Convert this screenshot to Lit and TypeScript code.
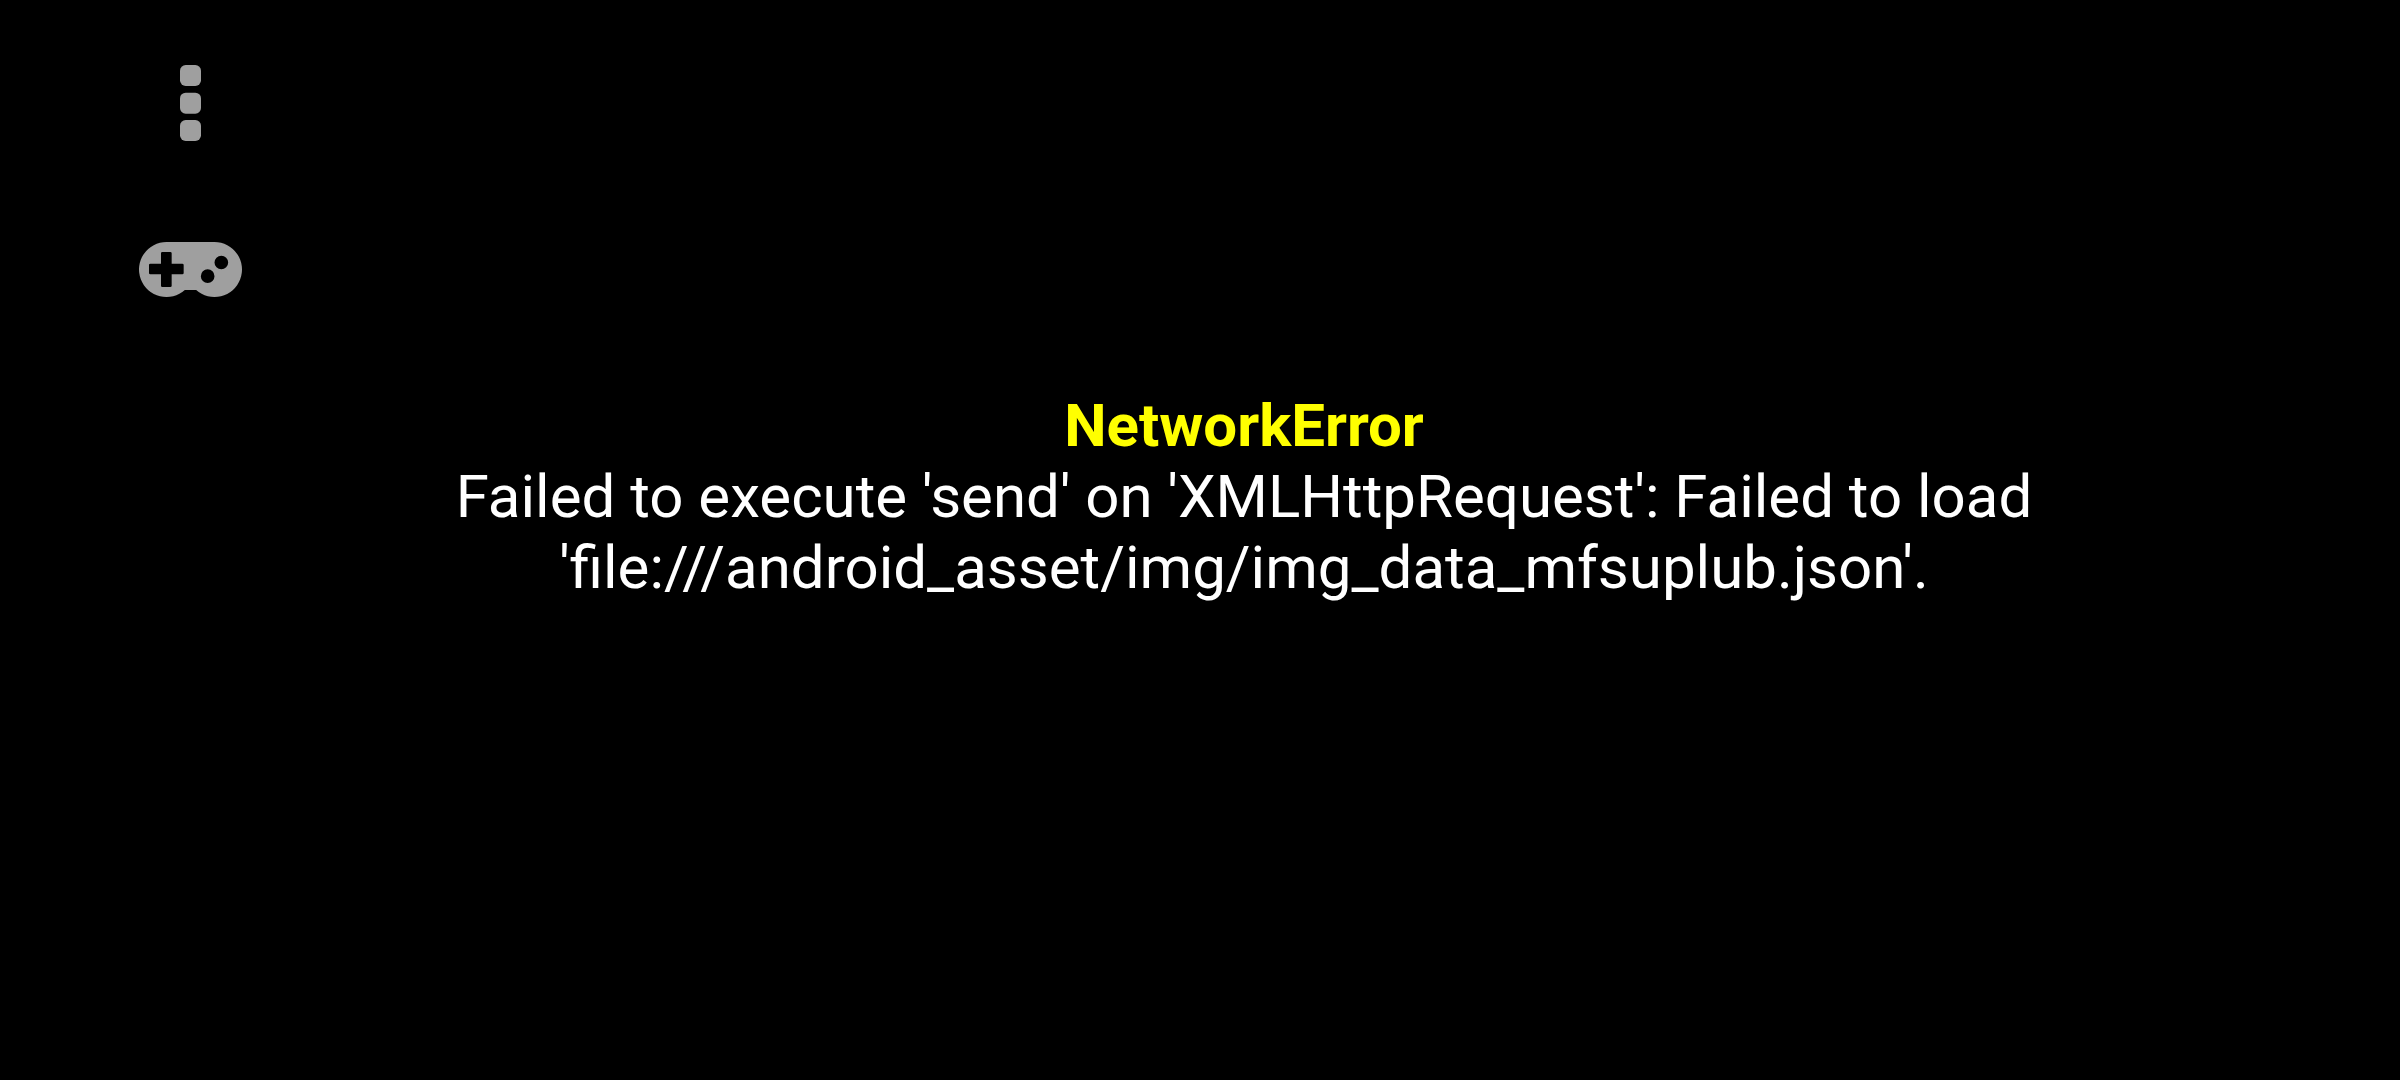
import { LitElement, html, css } from "lit";
import { customElement, property } from "lit/decorators.js";

@customElement("error-message")
class ErrorMessage extends LitElement {
  @property() name = "";
  @property({ attribute: false }) lines: string[] = [];

  static styles = css`
    :host {
      display: block;
      text-align: center;
      font-size: 60px;
      line-height: 71px;
      color: #fff;
    }
    .name {
      margin: 0;
      font-size: inherit;
      font-weight: 700;
      color: #ff0;
    }
    .text {
      margin: 0;
    }
    .line {
      display: block;
    }
  `;

  render() {
    return html`
      <h1 class="name">${this.name}</h1>
      <p class="text">
        ${this.lines.map((line) => html`<span class="line">${line}</span>`)}
      </p>
    `;
  }
}

@customElement("side-controls")
class SideControls extends LitElement {
  static styles = css`
    :host {
      display: flex;
      flex-direction: column;
      align-items: center;
      gap: 101px;
      width: 205px;
      padding-top: 65px;
    }
    .control {
      display: flex;
      margin: 0;
      padding: 0;
      border: 0;
      background: none;
      color: #9f9f9f;
      cursor: pointer;
    }
    .icon {
      display: block;
      fill: currentColor;
    }
  `;

  render() {
    return html`
      <button class="control" type="button" aria-label="Menu">
        <svg class="icon" width="21" height="76" viewBox="0 0 63 228" aria-hidden="true">
          <rect x="0" y="0" width="63" height="63" rx="17" />
          <rect x="0" y="83" width="63" height="63" rx="17" />
          <rect x="0" y="165" width="63" height="63" rx="17" />
        </svg>
      </button>
      <button class="control" type="button" aria-label="Gamepad">
        <svg class="icon" width="103" height="55" viewBox="27 36 309 165" aria-hidden="true">
          <path
            fill-rule="evenodd"
            d="M109.5 36H253.5A82.5 82.5 0 1 1 198.5 180H164.5A82.5 82.5 0 1 1 109.5 36Z
               M97 66a4 4 0 0 0-4 4V101H61a4 4 0 0 0-4 4V129a4 4 0 0 0 4 4H93V167a4 4 0 0 0 4 4H121a4 4 0 0 0 4-4V133H157a4 4 0 0 0 4-4V105a4 4 0 0 0-4-4H125V70a4 4 0 0 0-4-4Z
               M253.5 97.500a20.500 20.500 0 1 0 41 0a20.500 20.500 0 1 0-41 0Z
               M212.500 138.500a20.500 20.500 0 1 0 41 0a20.500 20.500 0 1 0-41 0Z"
          />
        </svg>
      </button>
    `;
  }
}

@customElement("app-root")
class AppRoot extends LitElement {
  static styles = css`
    :host {
      display: block;
      min-height: 100vh;
      background: #000;
      font-family: Roboto, "Liberation Sans", sans-serif;
    }
    .screen {
      display: grid;
      padding-left: 88px;
    }
    .controls,
    .message {
      grid-area: 1 / 1;
    }
    .controls {
      justify-self: start;
      align-self: start;
      z-index: 1;
    }
    .message {
      padding-top: 390px;
    }
  `;

  render() {
    return html`
      <main class="screen">
        <side-controls class="controls"></side-controls>
        <error-message
          class="message"
          name="NetworkError"
          .lines=${[
            "Failed to execute 'send' on 'XMLHttpRequest': Failed to load",
            "'file:///android_asset/img/img_data_mfsuplub.json'.",
          ]}
        ></error-message>
      </main>
    `;
  }
}
